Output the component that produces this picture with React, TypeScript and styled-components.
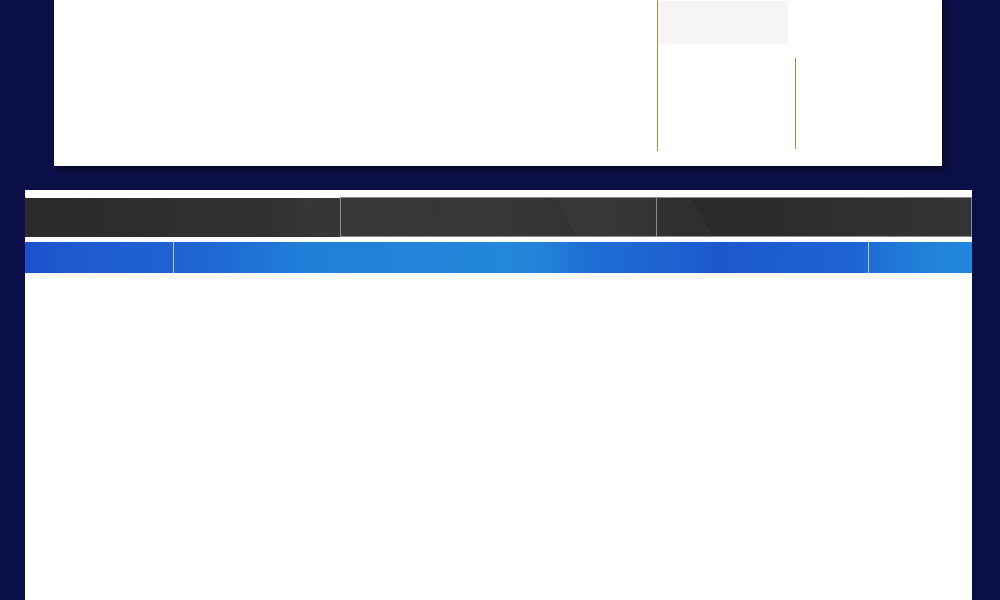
import styled, { createGlobalStyle } from 'styled-components'

const GlobalStyle = createGlobalStyle`
  html, body {
    margin: 0;
    padding: 0;
    background: #0b0f47;
    font-family: "Liberation Sans", Arial, sans-serif;
  }
  #root {
    min-height: 100vh;
  }
`

const Page = styled.div`
  display: flex;
  flex-direction: column;
  width: 1000px;
  min-height: 600px;
  overflow: hidden;
`

// top white block with the gold-ruled columns on the right
const Header = styled.header`
  display: flex;
  align-items: flex-start;
  width: 888px;
  height: 166px;
  margin-left: 54px;
  background: #fff;
  box-shadow: 3px 3px 7px rgba(0, 0, 0, 0.55);
`

const HeaderSpace = styled.div`
  flex: 1;
`

const RuledColumn = styled.div<{ $top?: number; $height: number; $width: number }>`
  display: flex;
  flex-direction: column;
  width: ${(p) => p.$width}px;
  height: ${(p) => p.$height}px;
  margin-top: ${(p) => p.$top ?? 0}px;
  border-left: 1px solid #b2873f;
  box-sizing: border-box;
`

const GreyTab = styled.div`
  width: 130px;
  height: 43px;
  margin-top: 1px;
  background: #f5f5f5;
`

const Main = styled.main`
  display: flex;
  flex-direction: column;
  gap: 5px;
  width: 947px;
  flex: 1;
  min-height: 410px;
  margin: 24px 0 0 25px;
  padding-top: 7px;
  box-sizing: border-box;
  background: #fff;
`

const DarkBar = styled.div`
  display: flex;
  height: 40px;
  background:
    linear-gradient(62deg, transparent 0 57%, rgba(255, 255, 255, 0.025) 57% 71%, transparent 71%),
    linear-gradient(118deg, transparent 0 30%, rgba(0, 0, 0, 0.04) 30% 44%, transparent 44%),
    linear-gradient(90deg,
      #2a2a2a 0,
      #2c2c2c 60px,
      #2f2f2f 170px,
      #313131 250px,
      #383838 290px,
      #3a3a3a 360px,
      #383838 430px,
      #383838 470px,
      #343434 520px,
      #313131 610px,
      #2a2a2a 650px,
      #2b2b2b 720px,
      #2e2e2e 800px,
      #313131 870px,
      #343434 947px);
`

const DarkCell = styled.div<{ $flush?: boolean; $last?: boolean; $width: number }>`
  width: ${(p) => p.$width}px;
  box-sizing: border-box;
  border: 1px solid #8c8c8c;
  border-right-width: ${(p) => (p.$last ? 1 : 0)}px;
  ${(p) => p.$flush && 'border-color: #fff transparent transparent transparent;'}
`

const BlueBar = styled.div`
  display: flex;
  height: 31px;
  background:
    linear-gradient(90deg,
      #1d4fcc 0,
      #1e5acf 40px,
      #1f60d0 130px,
      #1f66d2 175px,
      #2072d6 230px,
      #2080d8 285px,
      #2184da 420px,
      #2388dc 480px,
      #2182d9 520px,
      #1e6ed4 560px,
      #1e64d1 630px,
      #1c59cc 690px,
      #1d5ccf 750px,
      #1e63d2 830px,
      #1f74d7 860px,
      #2082da 905px,
      #2286dc 947px);
`

const BlueCell = styled.div<{ $width?: number }>`
  ${(p) => (p.$width ? `width: ${p.$width}px;` : 'flex: 1;')}
  box-sizing: border-box;
  & + & {
    border-left: 1px solid #b3c6ea;
  }
`

export default function App() {
  return (
    <>
      <GlobalStyle />
      <Page>
        <Header>
          <HeaderSpace />
          <RuledColumn $height={151} $width={138}>
            <GreyTab />
          </RuledColumn>
          <RuledColumn $top={58} $height={91} $width={147} />
        </Header>
        <Main>
          <DarkBar>
            <DarkCell $flush $width={315} />
            <DarkCell $width={316} />
            <DarkCell $last $width={316} />
          </DarkBar>
          <BlueBar>
            <BlueCell $width={148} />
            <BlueCell />
            <BlueCell $width={104} />
          </BlueBar>
        </Main>
      </Page>
    </>
  )
}
